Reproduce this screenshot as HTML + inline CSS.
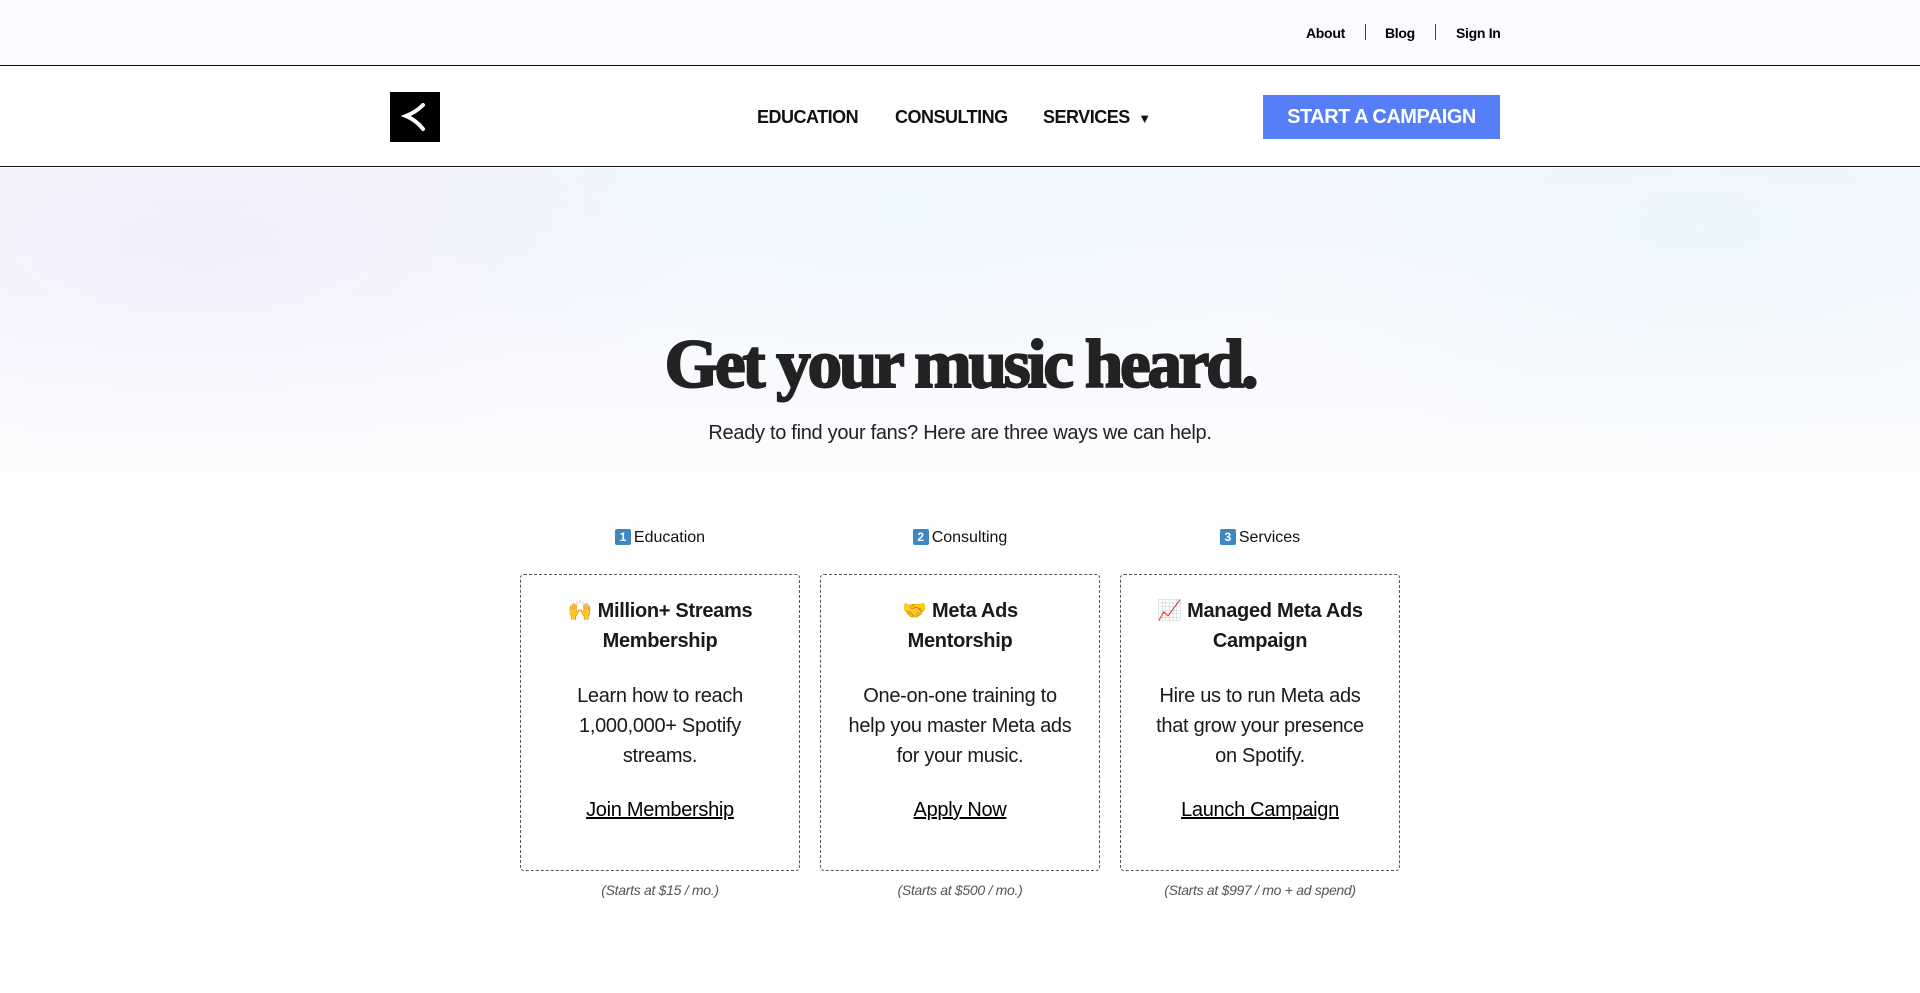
<!DOCTYPE html>
<html><head><meta charset="utf-8"><style>
*{margin:0;padding:0;box-sizing:border-box}
body{width:1920px;height:993px;overflow:hidden;font-family:"Liberation Sans","Noto Sans CJK JP",sans-serif;color:#1a1a1a;background:#fff;position:relative}
.top{position:absolute;left:0;top:0;width:1920px;height:66px;background:#fafbfe;border-bottom:1.5px solid #111}
.top a{position:absolute;top:25px;font-size:14px;font-weight:bold;color:#000;text-decoration:none;letter-spacing:-0.3px}
.sep{position:absolute;top:24px;width:1px;height:16px;background:#444}
.nav{position:absolute;left:0;top:66px;width:1920px;height:101px;background:#fff;border-bottom:1.5px solid #111}
.logo{position:absolute;left:390px;top:26px;width:50px;height:50px;background:#000}
.nl{position:absolute;top:41px;font-size:18px;font-weight:bold;color:#111;letter-spacing:-0.5px}
.btn{position:absolute;left:1263px;top:29px;width:237px;height:44px;background:#567ef8;color:#fff;font-size:20px;font-weight:bold;text-align:center;line-height:44px;letter-spacing:-0.5px}
.hero{position:absolute;left:0;top:168px;width:1920px;height:360px;background:
radial-gradient(ellipse 500px 200px at 200px 80px,rgba(235,228,255,.4),transparent),
radial-gradient(ellipse 600px 180px at 900px 40px,rgba(228,248,255,.5),transparent),
radial-gradient(ellipse 500px 220px at 1700px 60px,rgba(225,248,252,.5),transparent),
linear-gradient(#f5f6fd,#fafbfe 70%,#fff)}
h1{position:absolute;left:0;width:1920px;top:325px;text-align:center;font-family:"Liberation Serif",serif;font-weight:bold;font-size:69px;letter-spacing:-3.2px;color:#222;-webkit-text-stroke:2px #222}
.sub{position:absolute;left:0;width:1920px;top:422px;text-align:center;font-size:20px;color:#222;letter-spacing:-0.3px}
.lab{position:absolute;top:529px;width:280px;text-align:center;font-size:16px;color:#111}
.num{display:inline-block;width:16px;height:16px;background:#3b88c3;color:#fff;font-size:12px;font-weight:bold;line-height:16px;border-radius:2px;vertical-align:1px;margin-right:3px}
.card{position:absolute;top:574px;width:280px;height:297px;border:1.5px dashed #555;border-radius:4px;text-align:center}
.ct{position:absolute;top:21px;left:0;right:0;font-size:20px;font-weight:bold;line-height:30px;letter-spacing:-0.3px;white-space:nowrap}
.cd{position:absolute;top:106px;left:0;right:0;font-size:20px;line-height:30px;letter-spacing:-0.3px;white-space:nowrap}
.cl{position:absolute;top:224px;left:0;right:0;font-size:20px;text-decoration:underline;color:#000;letter-spacing:-0.3px}
.pr{position:absolute;top:882px;width:280px;text-align:center;font-size:14px;font-style:italic;color:#555;letter-spacing:-0.3px}
</style></head><body>
<div class="top">
<a style="left:1306px">About</a><div class="sep" style="left:1365px"></div>
<a style="left:1385px">Blog</a><div class="sep" style="left:1435px"></div>
<a style="left:1456px">Sign In</a>
</div>
<div class="nav">
<div class="logo"><svg width="50" height="50" viewBox="0 0 50 50"><path d="M33 13 Q26 20 16 24 Q26 28 33 37" stroke="#fff" stroke-width="4" fill="none" stroke-linecap="round"/></svg></div>
<div class="nl" style="left:757px">EDUCATION</div>
<div class="nl" style="left:895px">CONSULTING</div>
<div class="nl" style="left:1043px">SERVICES <span style="font-size:13px;margin-left:4px">▼</span></div>
<div class="btn">START A CAMPAIGN</div>
</div>
<div class="hero"></div>
<h1>Get your music heard.</h1>
<div class="sub">Ready to find your fans? Here are three ways we can help.</div>
<div class="lab" style="left:520px"><span class="num">1</span>Education</div>
<div class="lab" style="left:820px"><span class="num">2</span>Consulting</div>
<div class="lab" style="left:1120px"><span class="num">3</span>Services</div>
<div class="card" style="left:520px"><div class="ct">🙌 Million+ Streams<br>Membership</div><div class="cd">Learn how to reach<br>1,000,000+ Spotify<br>streams.</div><div class="cl">Join Membership</div></div>
<div class="card" style="left:820px"><div class="ct">🤝 Meta Ads<br>Mentorship</div><div class="cd">One-on-one training to<br>help you master Meta ads<br>for your music.</div><div class="cl">Apply Now</div></div>
<div class="card" style="left:1120px"><div class="ct">📈 Managed Meta Ads<br>Campaign</div><div class="cd">Hire us to run Meta ads<br>that grow your presence<br>on Spotify.</div><div class="cl">Launch Campaign</div></div>
<div class="pr" style="left:520px">(Starts at $15 / mo.)</div>
<div class="pr" style="left:820px">(Starts at $500 / mo.)</div>
<div class="pr" style="left:1120px">(Starts at $997 / mo + ad spend)</div>
</body></html>
